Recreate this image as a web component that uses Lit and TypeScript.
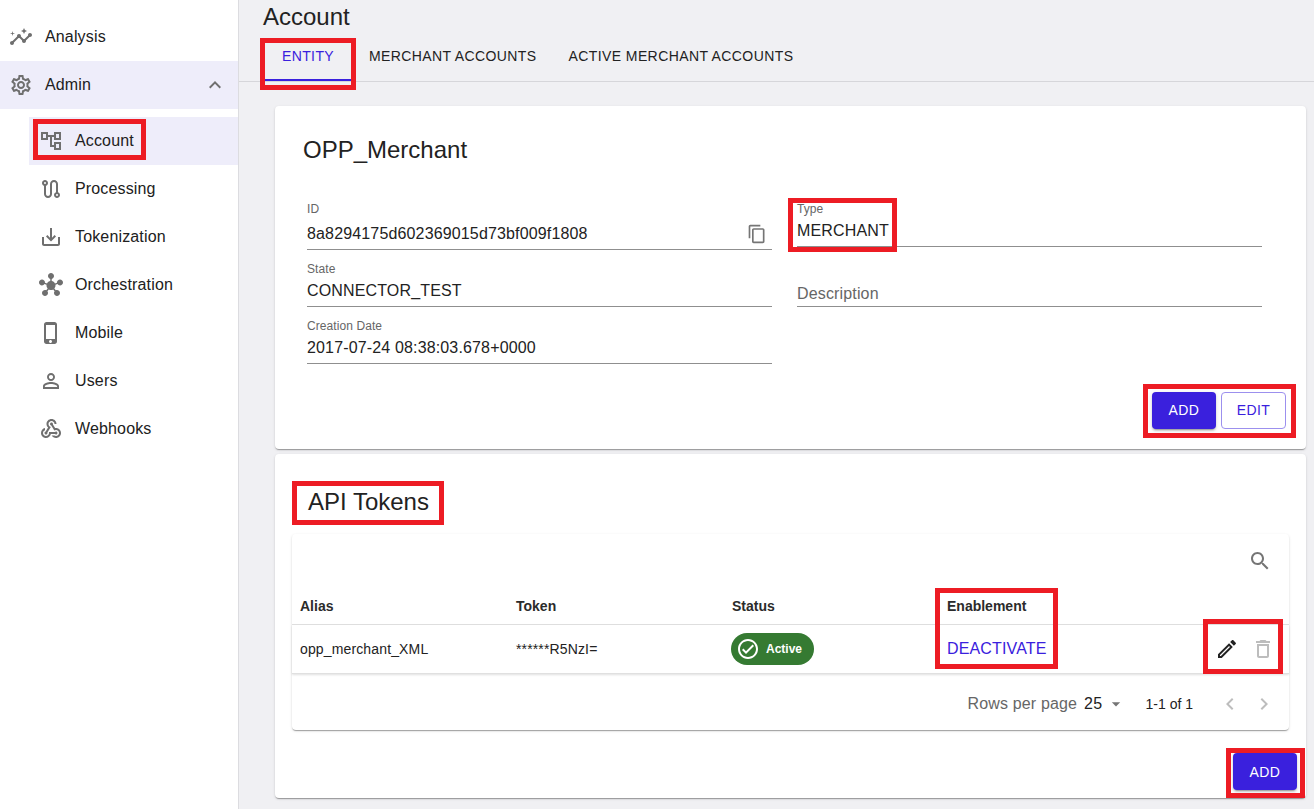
import { LitElement, html, css, svg } from "lit";
import { customElement } from "lit/decorators.js";

const P: Record<string, string> = {
  insights: "M21 8c-1.45 0-2.26 1.44-1.93 2.51l-3.55 3.56c-.3-.09-.74-.09-1.04 0l-2.55-2.55C12.27 10.45 11.46 9 10 9c-1.45 0-2.27 1.44-1.93 2.52l-4.56 4.55C2.44 15.74 1 16.55 1 18c0 1.1.9 2 2 2 1.45 0 2.26-1.44 1.93-2.51l4.55-4.56c.3.09.74.09 1.04 0l2.55 2.55C12.73 16.55 13.54 18 15 18c1.45 0 2.27-1.44 1.93-2.52l3.56-3.55c1.07.33 2.51-.48 2.51-1.93 0-1.1-.9-2-2-2zM15 9l.94-2.07L18 6l-2.06-.93L15 3l-.92 2.07L12 6l2.08.93zM3.5 11 4 9l2-.5L4 8l-.5-2L3 8l-2 .5L3 9z",
  settings: "M19.43 12.98c.04-.32.07-.64.07-.98 0-.34-.03-.66-.07-.98l2.11-1.65c.19-.15.24-.42.12-.64l-2-3.46c-.09-.16-.26-.25-.44-.25-.06 0-.12.01-.17.03l-2.49 1c-.52-.4-1.08-.73-1.69-.98l-.38-2.65C14.46 2.18 14.25 2 14 2h-4c-.25 0-.46.18-.49.42l-.38 2.65c-.61.25-1.17.59-1.69.98l-2.49-1c-.06-.02-.12-.03-.18-.03-.17 0-.34.09-.43.25l-2 3.46c-.13.22-.07.49.12.64l2.11 1.65c-.04.32-.07.65-.07.98 0 .33.03.66.07.98l-2.11 1.65c-.19.15-.24.42-.12.64l2 3.46c.09.16.26.25.44.25.06 0 .12-.01.17-.03l2.49-1c.52.4 1.08.73 1.69.98l.38 2.65c.03.24.24.42.49.42h4c.25 0 .46-.18.49-.42l.38-2.65c.61-.25 1.17-.59 1.69-.98l2.49 1c.06.02.12.03.18.03.17 0 .34-.09.43-.25l2-3.46c.12-.22.07-.49-.12-.64l-2.11-1.65zm-1.98-1.71c.04.31.05.52.05.73 0 .21-.02.43-.05.73l-.14 1.13.89.7 1.08.84-.7 1.21-1.27-.51-1.04-.42-.9.68c-.43.32-.84.56-1.25.73l-1.06.43-.16 1.13-.2 1.35h-1.4l-.19-1.35-.16-1.13-1.06-.43c-.43-.18-.83-.41-1.23-.71l-.91-.7-1.06.43-1.27.51-.7-1.21 1.08-.84.89-.7-.14-1.13c-.03-.31-.05-.54-.05-.74s.02-.43.05-.73l.14-1.13-.89-.7-1.08-.84.7-1.21 1.27.51 1.04.42.9-.68c.43-.32.84-.56 1.25-.73l1.06-.43.16-1.13.2-1.35h1.39l.19 1.35.16 1.13 1.06.43c.43.18.83.41 1.23.71l.91.7 1.06-.43 1.27-.51.7 1.21-1.07.85-.89.7.14 1.13zM12 8c-2.21 0-4 1.79-4 4s1.79 4 4 4 4-1.79 4-4-1.79-4-4-4zm0 6c-1.1 0-2-.9-2-2s.9-2 2-2 2 .9 2 2-.9 2-2 2z",
  tree: "M22 11V3h-7v3H9V3H2v8h7V8h2v10h4v3h7v-8h-7v3h-2V8h2v3h7zM7 9H4V5h3v4zm10 6h3v4h-3v-4zm0-10h3v4h-3V5z",
  route: "M19 15.18V7c0-2.21-1.79-4-4-4s-4 1.79-4 4v10c0 1.1-.9 2-2 2s-2-.9-2-2V8.82C8.16 8.4 9 7.3 9 6c0-1.66-1.34-3-3-3S3 4.34 3 6c0 1.3.84 2.4 2 2.82V17c0 2.21 1.79 4 4 4s4-1.79 4-4V7c0-1.1.9-2 2-2s2 .9 2 2v8.18c-1.16.41-2 1.51-2 2.82 0 1.66 1.34 3 3 3s3-1.34 3-3c0-1.3-.84-2.4-2-2.82zM6 5a1 1 0 1 0 0 2 1 1 0 0 0 0-2zM18 17a1 1 0 1 0 0 2 1 1 0 0 0 0-2z",
  save: "M19 12v7H5v-7H3v7c0 1.1.9 2 2 2h14c1.1 0 2-.9 2-2v-7h-2zm-6 .67 2.59-2.58L17 11.5l-5 5-5-5 1.41-1.41L11 12.67V3h2z",
  hub: "M8.4 18.2c.38.5.6 1.12.6 1.8 0 1.66-1.34 3-3 3s-3-1.34-3-3 1.34-3 3-3c.44 0 .85.09 1.23.26l1.41-1.77c-.92-1.03-1.29-2.39-1.09-3.69l-2.03-.68c-.54.83-1.46 1.38-2.52 1.38-1.66 0-3-1.34-3-3s1.34-3 3-3 3 1.34 3 3c0 .07 0 .14-.01.21l2.03.68c.64-1.21 1.82-2.09 3.22-2.32V5.91C9.96 5.57 9 4.4 9 3c0-1.66 1.34-3 3-3s3 1.34 3 3c0 1.4-.96 2.57-2.25 2.91v2.16c1.4.23 2.58 1.11 3.22 2.32l2.03-.68C18 9.64 18 9.57 18 9.5c0-1.66 1.34-3 3-3s3 1.34 3 3-1.34 3-3 3c-1.06 0-1.98-.55-2.52-1.38l-2.03.68c.2 1.29-.16 2.65-1.09 3.69l1.41 1.77C17.15 17.09 17.56 17 18 17c1.66 0 3 1.34 3 3s-1.34 3-3 3-3-1.34-3-3c0-.68.22-1.3.6-1.8l-1.41-1.77c-1.35.75-3.01.76-4.37 0L8.4 18.2z",
  phone: "M15.5 1h-8C6.12 1 5 2.12 5 3.5v17C5 21.88 6.12 23 7.5 23h8c1.38 0 2.5-1.12 2.5-2.5v-17C18 2.12 16.88 1 15.5 1zm-4 21c-.83 0-1.5-.67-1.5-1.5s.67-1.5 1.5-1.5 1.5.67 1.5 1.5-.67 1.5-1.5 1.5zm4.5-4H7V4h9v14z",
  person: "M12 5.9c1.16 0 2.1.94 2.1 2.1s-.94 2.1-2.1 2.1S9.9 9.16 9.9 8s.94-2.1 2.1-2.1m0 9c2.97 0 6.1 1.46 6.1 2.1v1.1H5.9V17c0-.64 3.13-2.1 6.1-2.1M12 4C9.79 4 8 5.79 8 8s1.79 4 4 4 4-1.79 4-4-1.79-4-4-4zm0 9c-2.67 0-8 1.34-8 4v3h16v-3c0-2.66-5.33-4-8-4z",
  webhook: "M10 15h5.88c.27-.31.67-.5 1.12-.5.83 0 1.5.67 1.5 1.5s-.67 1.5-1.5 1.5c-.44 0-.84-.19-1.12-.5H11.9c-.46 2.28-2.48 4-4.9 4-2.76 0-5-2.24-5-5 0-2.42 1.72-4.44 4-4.9v2.07c-1.16.41-2 1.53-2 2.83 0 1.65 1.35 3 3 3s3-1.35 3-3v-1zm2.5-11c1.65 0 3 1.35 3 3h2c0-2.76-2.24-5-5-5s-5 2.24-5 5c0 1.43.6 2.71 1.55 3.62l-2.35 3.9c-.68.14-1.2.75-1.2 1.48 0 .83.67 1.5 1.5 1.5s1.5-.67 1.5-1.5c0-.16-.02-.31-.07-.45l3.38-5.63C10.49 9.61 9.5 8.42 9.5 7c0-1.65 1.35-3 3-3zm4.5 9c-.64 0-1.23.2-1.72.54l-3.05-5.07C11.53 8.35 11 7.74 11 7c0-.83.67-1.5 1.5-1.5S14 6.17 14 7c0 .15-.02.29-.06.43l2.19 3.65c.28-.05.57-.08.87-.08 2.76 0 5 2.24 5 5s-2.24 5-5 5c-1.85 0-3.47-1.01-4.33-2.5h2.67c.48.32 1.05.5 1.66.5 1.65 0 3-1.35 3-3s-1.35-3-3-3z",
  up: "M12 8l-6 6 1.41 1.41L12 10.83l4.59 4.58L18 14z",
  copy: "M16 1H4c-1.1 0-2 .9-2 2v14h2V3h12V1zm3 4H8c-1.1 0-2 .9-2 2v14c0 1.1.9 2 2 2h11c1.1 0 2-.9 2-2V7c0-1.1-.9-2-2-2zm0 16H8V7h11v14z",
  search: "M15.5 14h-.79l-.28-.27C15.41 12.59 16 11.11 16 9.5 16 5.91 13.09 3 9.5 3S3 5.91 3 9.5 5.91 16 9.5 16c1.61 0 3.09-.59 4.23-1.57l.27.28v.79l5 4.99L20.49 19l-4.99-5zm-6 0C7.01 14 5 11.99 5 9.5S7.01 5 9.5 5 14 7.01 14 9.5 11.99 14 9.5 14z",
  edit: "M14.06 9.02l.92.92L5.92 19H5v-.92l9.06-9.06M17.66 3c-.25 0-.51.1-.7.29l-1.83 1.83 3.75 3.75 1.83-1.83c.39-.39.39-1.02 0-1.41l-2.34-2.34c-.2-.2-.45-.29-.71-.29zm-3.6 3.19L3 17.25V21h3.75L17.81 9.94l-3.75-3.75z",
  del: "M6 19c0 1.1.9 2 2 2h8c1.1 0 2-.9 2-2V7H6v12zM8 9h8v10H8V9zm7.5-5-1-1h-5l-1 1H5v2h14V4z",
  check: "M12 2C6.48 2 2 6.48 2 12s4.48 10 10 10 10-4.48 10-10S17.52 2 12 2zm0 18c-4.41 0-8-3.59-8-8s3.59-8 8-8 8 3.59 8 8-3.59 8-8 8zm4.59-12.42L10 14.17l-2.59-2.58L6 13l4 4 8-8z",
  caret: "M7 10l5 5 5-5z",
  left: "M15.41 7.41 14 6l-6 6 6 6 1.41-1.41L10.83 12z",
  right: "M10 6 8.59 7.41 13.17 12l-4.58 4.59L10 18l6-6z",
};

const icon = (n: string, s = 24) => html`<svg class="ic" width=${s} height=${s} viewBox="0 0 24 24" fill="currentColor">${svg`<path fill-rule="evenodd" d=${P[n]}></path>`}</svg>`;

const MARKS = [
  [260, 38, 96, 52], [33, 119, 113, 41], [788, 198, 109, 54], [1143, 384, 153, 54],
  [292, 481, 152, 44], [935, 588, 123, 81], [1203, 619, 80, 55], [1226, 748, 79, 50],
];

@customElement("app-root")
export class AppRoot extends LitElement {
  static styles = css`
    :host { display: grid; grid-template-columns: 239px 1fr; height: 809px; width: 1314px; overflow: hidden; position: relative; background: #f0f0f3; font-family: "Liberation Sans", Arial, sans-serif; color: rgba(0,0,0,.87); }
    .ic { display: block; flex: none; }
    .side { background: #fff; border-right: 1px solid #dcdce0; padding-top: 13px; display: flex; flex-direction: column; color: #222; letter-spacing: .15px; }
    .item { height: 48px; display: flex; align-items: center; font-size: 16px; padding-left: 9px; gap: 12px; color: #212121; }
    .item .ic, .sub .ic { color: #6f6f6f; }
    .item.open { background: #eeedfa; justify-content: flex-start; padding-right: 11px; margin-bottom: 8px; }
    .item.open .up { margin-left: auto; }
    .sub { height: 48px; display: flex; align-items: center; font-size: 16px; padding-left: 39px; gap: 12px; color: #212121; }
    .sub.on { background: #eeedfa; margin-left: 29px; padding-left: 10px; }
    .main { min-width: 0; display: flex; flex-direction: column; }
    h1 { font-size: 24px; font-weight: 400; margin: 0; padding: 3px 0 0 24px; height: 30px; line-height: 28px; box-sizing: border-box; margin-bottom: 3px; color: #222; }
    .tabs { display: flex; height: 48px; padding-left: 24px; border-bottom: 1px solid #d6d6da; }
    .tab { min-width: 90px; box-sizing: border-box; padding: 0 16px; height: 48px; display: flex; align-items: center; justify-content: center; font-size: 14px; font-weight: 400; letter-spacing: .4px; color: #222; border-bottom: 2px solid transparent; }
    .tab.on { color: #3a20dd; border-bottom-color: #3a20dd; }
    .cards { padding: 24px 8px 0 36px; display: flex; flex-direction: column; gap: 5px; }
    .card { background: #fff; border-radius: 4px; box-shadow: 0 2px 1px -1px rgba(0,0,0,.2), 0 1px 1px rgba(0,0,0,.14), 0 1px 3px rgba(0,0,0,.12); box-sizing: border-box; display: flex; flex-direction: column; }
    .entity { height: 343px; padding: 30px 20px 20px 28px; }
    h2 { font-size: 24px; font-weight: 400; margin: 0; line-height: 28px; color: #222; }
    .grid { display: grid; grid-template-columns: 465px 465px; column-gap: 25px; padding-left: 4px; margin-top: 38px; }
    .col { display: flex; flex-direction: column; }
    .f { border-bottom: 1px solid #8f8f8f; box-sizing: border-box; position: relative; }
    .l { font-size: 12px; line-height: 14px; color: #666; letter-spacing: .08px; }
    .v { font-size: 16px; line-height: 20px; color: #222; letter-spacing: .15px; }
    .f1 { height: 48px; margin-bottom: 12px; display: flex; flex-direction: column; }
    .f1 .v { margin-top: 8px; }
    .f1 .ic { position: absolute; right: 5px; top: 22px; color: #757575; }
    .f2, .f3 { height: 45px; }
    .f2 { margin-bottom: 12px; }
    .f2 .v, .f3 .v { margin-top: 5px; }
    .type { height: 45px; }
    .type .v { margin-top: 5px; }
    .f4 { height: 60px; display: flex; align-items: flex-end; padding-bottom: 2px; color: #666; font-size: 16px; line-height: 20px; letter-spacing: .15px; }
    .acts { margin-top: auto; display: flex; justify-content: flex-end; gap: 5px; }
    .btn { width: 65px; height: 37px; box-sizing: border-box; border-radius: 4px; display: flex; align-items: center; justify-content: center; font-size: 14px; letter-spacing: .4px; padding-bottom: 1px; }
    .btn.solid { width: 64px; background: #3a20dd; color: #fff; box-shadow: 0 3px 1px -2px rgba(0,0,0,.2), 0 2px 2px rgba(0,0,0,.14), 0 1px 5px rgba(0,0,0,.12); }
    .btn.line { border: 1px solid #9c90ee; color: #3a20dd; }
    .tokens { height: 344px; padding: 34px 17px 8px 17px; }
    .tokens h2 { padding-left: 16px; line-height: 28px; }
    .table { margin-top: 18px; border-radius: 4px; box-shadow: 0 2px 1px -1px rgba(0,0,0,.2), 0 1px 1px rgba(0,0,0,.14), 0 1px 3px rgba(0,0,0,.12); height: 196px; display: flex; flex-direction: column; }
    .bar { height: 54px; display: flex; justify-content: flex-end; align-items: center; padding-right: 17px; color: #757575; }
    .row { display: grid; grid-template-columns: 216px 216px 215px 1fr 80px; padding-left: 8px; align-items: center; font-size: 14px; }
    .head { height: 36px; font-weight: 700; color: #2b2b2b; border-bottom: 1px solid #e0e0e0; }
    .body { height: 49px; padding-bottom: 1px; box-sizing: border-box; border-bottom: 1px solid #e0e0e0; box-shadow: 0 1px 2px rgba(0,0,0,.12); color: #222; letter-spacing: .14px; }
    .chip { display: inline-flex; align-items: center; height: 32px; width: 83px; box-sizing: border-box; padding-left: 5px; gap: 6px; border-radius: 16px; background: #357a32; color: #fff; font-size: 12px; margin-left: -1px; font-weight: 700; letter-spacing: 0; vertical-align: middle; }
    .link { color: #3a20dd; font-size: 16px; }
    .tools { display: flex; align-items: center; gap: 12px; padding-left: 6px; }
    .tools .d { color: #bdbdbd; }
    .foot { flex: 1; display: flex; align-items: center; justify-content: flex-end; padding: 3px 13px 0 0; font-size: 14px; }
    .rpp { color: #666; font-size: 16px; letter-spacing: .15px; }
    .n { font-size: 16px; color: #222; margin-left: 7px; letter-spacing: .3px; }
    .foot .c { color: #757575; margin-left: 3px; }
    .range { margin: 0 25px 0 20px; color: #222; }
    .pg { display: flex; gap: 10px; color: #bdbdbd; }
    .add2 { margin-top: auto; display: flex; justify-content: flex-end; margin-right: -8px; }
    .add2 .btn { padding: 1px 0 0; }
    .mark { position: absolute; border: 5px solid #ed1c24; box-sizing: border-box; pointer-events: none; }
  `;

  render() {
    const subs = [["save", "Tokenization"], ["hub", "Orchestration"], ["phone", "Mobile"], ["person", "Users"], ["webhook", "Webhooks"]];
    return html`
      <nav class="side">
        <div class="item">${icon("insights")}<span>Analysis</span></div>
        <div class="item open">${icon("settings")}<span>Admin</span><span class="up">${icon("up")}</span></div>
        <div class="sub on">${icon("tree")}<span>Account</span></div>
        <div class="sub">${icon("route")}<span>Processing</span></div>
        ${subs.map(([i, t]) => html`<div class="sub">${icon(i)}<span>${t}</span></div>`)}
      </nav>
      <main class="main">
        <h1>Account</h1>
        <div class="tabs">
          <div class="tab on">ENTITY</div>
          <div class="tab">MERCHANT ACCOUNTS</div>
          <div class="tab">ACTIVE MERCHANT ACCOUNTS</div>
        </div>
        <div class="cards">
          <section class="card entity">
            <h2>OPP_Merchant</h2>
            <div class="grid">
              <div class="col">
                <div class="f f1"><div class="l">ID</div><div class="v">8a8294175d602369015d73bf009f1808</div>${icon("copy", 20)}</div>
                <div class="f f2"><div class="l">State</div><div class="v">CONNECTOR_TEST</div></div>
                <div class="f f3"><div class="l">Creation Date</div><div class="v">2017-07-24 08:38:03.678+0000</div></div>
              </div>
              <div class="col">
                <div class="f type"><div class="l">Type</div><div class="v">MERCHANT</div></div>
                <div class="f f4">Description</div>
              </div>
            </div>
            <div class="acts"><div class="btn solid">ADD</div><div class="btn line">EDIT</div></div>
          </section>
          <section class="card tokens">
            <h2>API Tokens</h2>
            <div class="table">
              <div class="bar">${icon("search")}</div>
              <div class="row head"><div>Alias</div><div>Token</div><div>Status</div><div>Enablement</div><div></div></div>
              <div class="row body">
                <div>opp_merchant_XML</div><div>******R5NzI=</div>
                <div><span class="chip">${icon("check")}Active</span></div>
                <div class="link">DEACTIVATE</div>
                <div class="tools">${icon("edit")}<span class="d">${icon("del")}</span></div>
              </div>
              <div class="foot">
                <span class="rpp">Rows per page</span><span class="n">25</span><span class="c">${icon("caret", 20)}</span>
                <span class="range">1-1 of 1</span>
                <span class="pg">${icon("left")}${icon("right")}</span>
              </div>
            </div>
            <div class="add2"><div class="btn solid">ADD</div></div>
          </section>
        </div>
      </main>
      ${MARKS.map(([x, y, w, h]) => html`<div class="mark" style="left:${x}px;top:${y}px;width:${w}px;height:${h}px"></div>`)}
    `;
  }
}
